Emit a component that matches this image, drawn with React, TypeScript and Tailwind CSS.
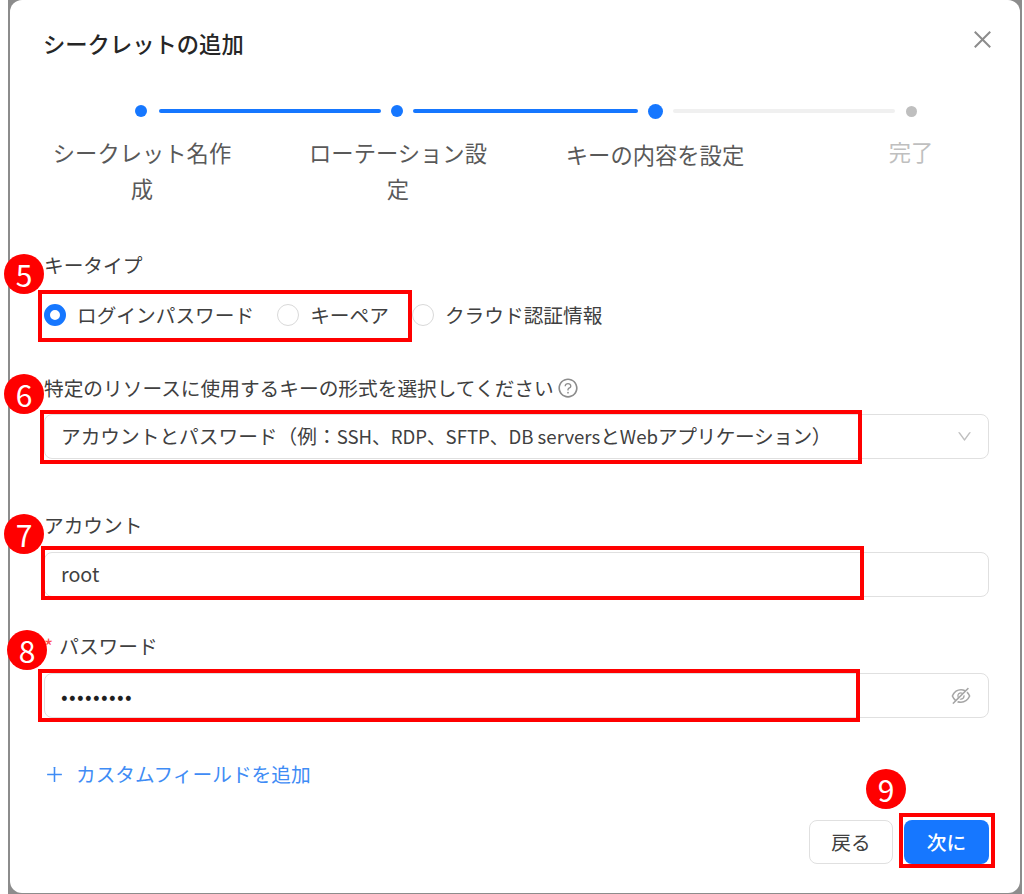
import {
  AiOutlineClose,
  AiOutlineDown,
  AiOutlineEyeInvisible,
  AiOutlinePlus,
  AiOutlineQuestionCircle,
} from 'react-icons/ai';

const fontStack = '[font-family:"Noto_Sans_CJK_JP","Noto_Sans",sans-serif]';

const Badge = ({ n, className }: { n: number; className: string }) => (
  <div
    className={`absolute flex h-[40px] w-[40px] items-center justify-center rounded-full bg-[#ff0000] text-[30px] leading-none text-white ${className}`}
  >
    {n}
  </div>
);

const RedBox = ({ className }: { className: string }) => (
  <div className={`pointer-events-none absolute border-[4px] border-[#ff0000] ${className}`} />
);

const Radio = ({ checked, label }: { checked?: boolean; label: string }) => (
  <label className="flex items-center gap-[11px]">
    <span
      className={
        checked
          ? 'h-[22px] w-[22px] rounded-full border-[6px] border-[#1677ff] bg-white'
          : 'h-[22px] w-[22px] rounded-full border border-[#d9d9d9] bg-white'
      }
    />
    <span>{label}</span>
  </label>
);

const InputBox = ({ children }: { children: React.ReactNode }) => (
  <div className="flex h-[45px] items-center justify-between rounded-[8px] border border-[#e0e0e0] bg-white pl-[16px] pr-[16px]">
    {children}
  </div>
);

export default function App() {
  return (
    <div className={`relative h-[894px] w-[1024px] overflow-hidden bg-white ${fontStack}`}>
      <div className="ml-[8px] mr-[2px] h-[894px] bg-[#8c8c8c]">
        <div className="mx-[2px] h-[893px] rounded-[12px] bg-white pl-[34px] pr-[31px] pt-[30px] text-[19.7px] text-[#404040]">
          <div className="flex h-[30px] items-center justify-between">
            <h1 className="-ml-[1px] -mt-[4px] text-[22.3px] font-medium leading-[30px] text-[#262626]">シークレットの追加</h1>
            <AiOutlineClose className="-mt-[12px] mr-[-6px] text-[25px] text-[#8c8c8c]" />
          </div>

          <div className="ml-[91px] mt-[44px] flex h-[14px] items-center">
            <span className="mr-[12px] h-[12px] w-[12px] rounded-full bg-[#1677ff]" />
            <span className="h-[4px] w-[222px] rounded-full bg-[#1677ff]" />
            <span className="mx-[10px] h-[12px] w-[12px] rounded-full bg-[#1677ff]" />
            <span className="h-[4px] w-[225px] rounded-full bg-[#1677ff]" />
            <span className="mx-[10px] h-[15px] w-[15px] rounded-full bg-[#1677ff]" />
            <span className="h-[4px] w-[222px] rounded-full bg-[#f0f0f0]" />
            <span className="ml-[11px] h-[11px] w-[11px] rounded-full bg-[#bfbfbf]" />
          </div>

          <div className="ml-[3px] mt-[16px] flex h-[74px] gap-[66px] text-center text-[22.3px] leading-[36px] text-[#595959]">
            <div className="w-[190px] shrink-0">シークレット名作成</div>
            <div className="w-[190px] shrink-0">ローテーション設定</div>
            <div className="ml-[1px] w-[190px] shrink-0 pt-[2px]">キーの内容を設定</div>
            <div className="-mt-[1px] w-[190px] shrink-0 text-[#bfbfbf]">完了</div>
          </div>

          <div className="mt-[43px] h-[28px] leading-[28px]">キータイプ</div>
          <div className="mt-[21px] flex h-[30px] items-center gap-[23px] leading-[30px]">
            <Radio checked label="ログインパスワード" />
            <Radio label="キーペア" />
            <Radio label="クラウド認証情報" />
          </div>

          <div className="mt-[44px] flex h-[28px] items-center gap-[3px] leading-[28px]">
            特定のリソースに使用するキーの形式を選択してください
            <AiOutlineQuestionCircle className="text-[22px] text-[#8c8c8c]" />
          </div>
          <div className="mt-[12px]">
            <InputBox>
              <span className="-mt-[2px] whitespace-nowrap">
                アカウントとパスワード（例：
                <span className="text-[18.6px]">SSH、RDP、SFTP、DB servers</span>
                と<span className="text-[18.6px]">Web</span>
                <span className="tracking-[-0.4px]">アプリケーション）</span>
              </span>
              <AiOutlineDown className="mr-[-1px] text-[17px] text-[#bfbfbf]" />
            </InputBox>
          </div>

          <div className="mt-[52px] h-[28px] leading-[28px]">アカウント</div>
          <div className="mt-[13px]">
            <InputBox>
              <span className="-mt-[2px]">root</span>
            </InputBox>
          </div>

          <div className="mt-[35px] flex h-[28px] items-center leading-[28px]">
            <span className="mr-[6px] text-[#ff4d4f]">*</span>
            パスワード
          </div>
          <div className="mt-[13px]">
            <InputBox>
              <span className="tracking-[1.3px] text-[#1f1f1f]">•••••••••</span>
              <AiOutlineEyeInvisible className="text-[22px] text-[#a6a6a6]" />
            </InputBox>
          </div>

          <div className="mt-[41px] flex h-[30px] items-center gap-[11px] leading-[30px] text-[#3f8cf5]">
            <AiOutlinePlus className="text-[21px]" />
            カスタムフィールドを追加
          </div>

          <div className="mt-[31px] flex justify-end gap-[11px]">
            <button className="flex h-[44px] w-[84px] items-center justify-center rounded-[8px] border border-[#e0e0e0] bg-white">
              戻る
            </button>
            <button className="flex h-[44px] w-[85px] items-center justify-center rounded-[8px] bg-[#1677ff] font-medium text-white">
              次に
            </button>
          </div>
        </div>
      </div>

      <RedBox className="left-[38px] top-[290px] h-[52px] w-[374px]" />
      <RedBox className="left-[40px] top-[410px] h-[54px] w-[822px]" />
      <RedBox className="left-[41px] top-[546px] h-[54px] w-[823px]" />
      <RedBox className="left-[38px] top-[669px] h-[53px] w-[822px]" />
      <RedBox className="left-[899px] top-[813px] h-[55px] w-[96px]" />

      <Badge n={5} className="left-[4px] top-[254px]" />
      <Badge n={6} className="left-[4px] top-[374px]" />
      <Badge n={7} className="left-[4px] top-[514px]" />
      <Badge n={8} className="left-[7px] top-[630px]" />
      <Badge n={9} className="left-[866px] top-[769px]" />
    </div>
  );
}
